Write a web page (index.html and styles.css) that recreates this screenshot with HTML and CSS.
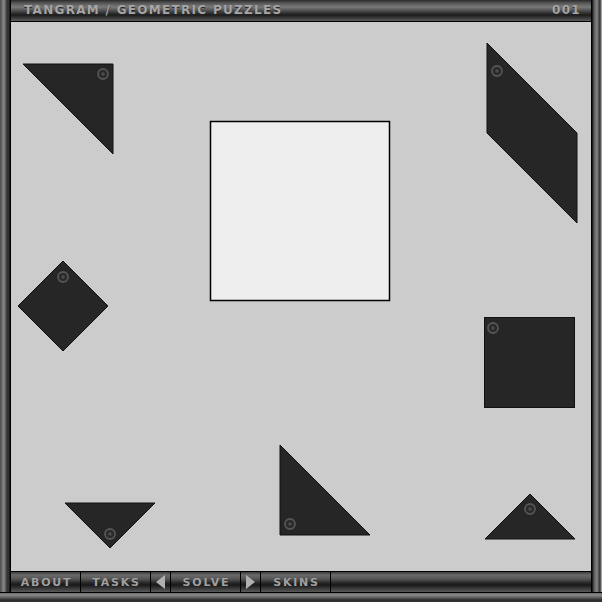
FILE: index.html
```
<!DOCTYPE html>
<html lang="en">
<head>
    <meta charset="UTF-8">
    <meta name="viewport" content="width=device-width, initial-scale=1.0">
    <title>Tangram / Geometric Puzzles</title>
    <link rel="stylesheet" href="styles.css">
</head>
<body>
    <div class="frame">
        <div class="side side-left"></div>
        <div class="titlebar">
            <span class="title">TANGRAM / GEOMETRIC PUZZLES</span>
            <span class="counter">001</span>
        </div>
        <div class="side side-right"></div>

        <div class="board">
            <svg class="canvas" width="580" height="549" viewBox="11 22 580 549">
                <!-- target -->
                <rect class="target" x="210.5" y="121.5" width="179" height="179"/>

                <!-- pieces -->
                <polygon class="piece" points="23,64 113,64 113,154"/>
                <polygon class="piece" points="487,43 577,133 577,223 487,133"/>
                <polygon class="piece" points="63,261 108,306 63,351 18,306"/>
                <rect class="piece" x="484.5" y="317.5" width="90" height="90"/>
                <polygon class="piece" points="280,445 370,535 280,535"/>
                <polygon class="piece" points="65,503 155,503 110,548"/>
                <polygon class="piece" points="530,494 575,539 485,539"/>

                <!-- pins -->
                <g class="pin" transform="translate(103 74)"><circle r="5"/><circle class="dot" r="1.8"/></g>
                <g class="pin" transform="translate(497 71)"><circle r="5"/><circle class="dot" r="1.8"/></g>
                <g class="pin" transform="translate(63 277)"><circle r="5"/><circle class="dot" r="1.8"/></g>
                <g class="pin" transform="translate(493 328)"><circle r="5"/><circle class="dot" r="1.8"/></g>
                <g class="pin" transform="translate(290 524)"><circle r="5"/><circle class="dot" r="1.8"/></g>
                <g class="pin" transform="translate(110 534)"><circle r="5"/><circle class="dot" r="1.8"/></g>
                <g class="pin" transform="translate(530 509)"><circle r="5"/><circle class="dot" r="1.8"/></g>
            </svg>
        </div>

        <div class="menubar">
            <button class="btn">ABOUT</button>
            <button class="btn">TASKS</button>
            <button class="btn arrow"><span class="tri tri-left"></span></button>
            <button class="btn">SOLVE</button>
            <button class="btn arrow"><span class="tri tri-right"></span></button>
            <button class="btn">SKINS</button>
            <div class="filler"></div>
        </div>

        <div class="footer"></div>
    </div>
</body>
</html>
```

FILE: styles.css
```
body {
    margin: 0;
    background: #000;
    font-family: "DejaVu Sans", Verdana, sans-serif;
}
.frame {
    width: 602px;
    height: 602px;
    display: grid;
    grid-template-columns: 11px 580px 11px;
    grid-template-rows: 22px 549px 21px 10px;
    grid-template-areas:
        "left top right"
        "left board right"
        "left menu right"
        "foot foot foot";
}
.side-left {
    grid-area: left;
    background: linear-gradient(to right, #4a4a4a 0, #6e6e6e 2px, #8a8a8a 4px, #4d4d4d 6px, #2a2a2a 8px, #3a3a3a 9px, #000 10px, #000 11px);
}
.side-right {
    grid-area: right;
    background: linear-gradient(to right, #000 0, #000 1px, #3c3c3c 2px, #6a6a6a 4px, #858585 6px, #4a4a4a 8px, #2e2e2e 9px, #7c8590 10px, #b8c0cc 11px);
}
.titlebar {
    grid-area: top;
    display: flex;
    justify-content: space-between;
    align-items: center;
    padding: 0 10px 1px 13px;
    border-bottom: 1px solid #000;
    background: linear-gradient(#2a2a2a 0, #555 3px, #7a7a7a 7px, #4a4a4a 11px, #1c1c1c 15px, #3a3a3a 18px, #5c5c5c 21px);
}
.title, .counter {
    font-size: 12px;
    font-weight: bold;
    letter-spacing: 1.3px;
    color: #a6a6a6;
    text-shadow: 0 1px 0 #222;
}
.board {
    grid-area: board;
    background: #cccccc;
    overflow: hidden;
}
.canvas {
    display: block;
}
.target {
    fill: #eeeeee;
    stroke: #000;
    stroke-width: 1.5;
}
.piece {
    fill: #262626;
    stroke: #111;
    stroke-width: 1;
}
.pin circle {
    fill: #2a2a2a;
    stroke: #555;
    stroke-width: 1.8;
}
.pin .dot {
    fill: #4c4c4c;
    stroke: none;
}
.menubar {
    grid-area: menu;
    display: flex;
    border-top: 1px solid #000;
    background: linear-gradient(#3a3a3a 0, #6a6a6a 3px, #555 7px, #262626 11px, #1a1a1a 13px, #3e3e3e 17px, #5a5a5a 20px);
}
.btn {
    width: 70px;
    height: 100%;
    padding: 0 0 0 2px;
    border: none;
    border-right: 1px solid #000;
    background: transparent;
    font-family: "DejaVu Sans", Verdana, sans-serif;
    font-size: 11px;
    font-weight: bold;
    letter-spacing: 1.8px;
    color: #a0a0a0;
    text-shadow: 0 1px 0 #222;
    cursor: pointer;
}
.btn.arrow {
    width: 20px;
    padding: 0;
    display: flex;
    align-items: center;
    justify-content: center;
}
.tri {
    width: 0;
    height: 0;
    border-top: 7px solid transparent;
    border-bottom: 7px solid transparent;
}
.tri-left {
    border-right: 9px solid #b0b0b0;
}
.tri-right {
    border-left: 9px solid #b0b0b0;
}
.filler {
    flex: 1;
}
.footer {
    grid-area: foot;
    border-top: 1px solid #000;
    background: linear-gradient(#6a6a6a 0, #8a8a8a 2px, #555 5px, #2a2a2a 7px, #3a3a3a 9px);
}
```
